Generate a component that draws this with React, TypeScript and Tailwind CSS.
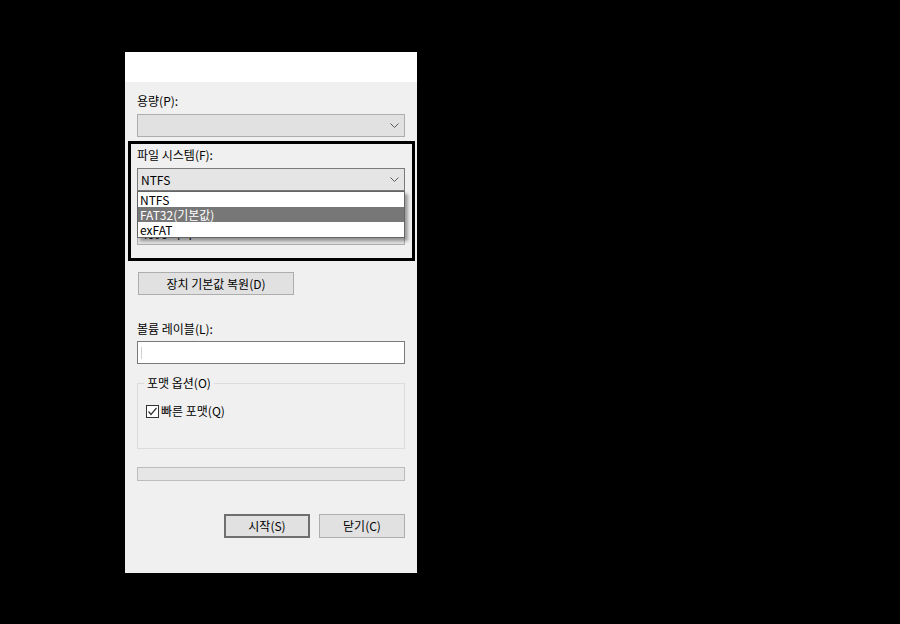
import React from "react";

const Chevron = () => (
  <svg width="9" height="5" viewBox="0 0 9 5" className="shrink-0">
    <polyline points="0.5,0.5 4.5,4.5 8.5,0.5" fill="none" stroke="#5a5a5a" strokeWidth="1" />
  </svg>
);

export default function App() {
  const font = { fontFamily: '"Noto Sans CJK KR", "Noto Sans", sans-serif' };
  return (
    <div className="w-[900px] h-[624px] bg-black pt-[52px] pl-[125px]" style={font}>
      <div className="relative w-[292px] h-[521px] flex flex-col bg-[#f0f0f0] text-[12px] text-black">
        <div className="h-[30px] bg-white shrink-0" />
        <div className="flex flex-col px-[12px]">
          <div className="mt-[11px] h-[16px] leading-[16px]">용량(P):</div>
          <div className="mt-[5px] h-[23px] border border-[#adadad] bg-[#e1e1e1] flex items-center justify-end pr-[5px]">
            <Chevron />
          </div>

          <div className="mt-[10px] h-[16px] leading-[16px]">파일 시스템(F):</div>
          <div className="mt-[5px] h-[23px] border border-[#7a7a7a] bg-[#e5e5e5] flex items-center justify-between pl-[3px] pr-[5px]">
            <span className="leading-[16px]">NTFS</span>
            <Chevron />
          </div>

          <div className="mt-[10px] h-[16px] leading-[16px] invisible">할당 단위 크기(A):</div>
          <div className="mt-[5px] h-[23px] border border-[#adadad] bg-[#e1e1e1] flex items-center justify-between pl-[3px] pr-[5px]">
            <span className="leading-[16px]">4096 바이트</span>
            <Chevron />
          </div>

          <button className="mt-[27px] ml-[1px] w-[156px] h-[23px] border border-[#adadad] bg-[#e1e1e1] text-[12px] leading-[16px]">
            장치 기본값 복원(D)
          </button>

          <div className="mt-[26px] h-[16px] leading-[16px]">볼륨 레이블(L):</div>
          <div className="mt-[4px] h-[23px] border border-[#7a7a7a] bg-white flex items-center pl-[3px]">
            <div className="w-px h-[12px] bg-[#d0d0d0]" />
          </div>

          <div className="relative mt-[19px] h-[66px] border border-[#dcdcdc]">
            <div className="absolute -top-[9px] left-[6px] px-[3px] bg-[#f0f0f0] leading-[16px]">포맷 옵션(O)</div>
            <div className="flex items-center mt-[19px] ml-[8px] gap-[2px]">
              <div className="w-[13px] h-[13px] border border-[#333333] bg-white flex items-center justify-center">
                <svg width="11" height="11" viewBox="0 0 11 11">
                  <polyline points="1.5,5.5 4,8.5 9.5,2" fill="none" stroke="#333333" strokeWidth="1.2" />
                </svg>
              </div>
              <span className="leading-[16px]">빠른 포맷(Q)</span>
            </div>
          </div>

          <div className="mt-[18px] h-[14px] border border-[#bcbcbc] bg-[#e6e6e6]" />

          <div className="mt-[33px] flex justify-end gap-[9px]">
            <button className="w-[86px] h-[24px] border-2 border-[#6f6f6f] bg-[#e1e1e1] text-[12px] leading-[16px]">
              시작(S)
            </button>
            <button className="w-[86px] h-[24px] border border-[#adadad] bg-[#e1e1e1] text-[12px] leading-[16px]">
              닫기(C)
            </button>
          </div>
        </div>

        {/* dropdown list */}
        <div className="absolute left-[12px] top-[139px] w-[268px] border border-[#646464] bg-white flex flex-col shadow-[3px_3px_3px_rgba(0,0,0,0.35)]">
          <div className="h-[15px] leading-[15px] pl-[2px]">NTFS</div>
          <div className="h-[15px] leading-[15px] pl-[2px] bg-[#777777] text-white">FAT32(기본값)</div>
          <div className="h-[15px] leading-[15px] pl-[2px]">exFAT</div>
        </div>

        {/* highlight frame */}
        <div className="absolute left-[3px] top-[89px] w-[287px] h-[120px] border-[3px] border-black pointer-events-none" />
      </div>
    </div>
  );
}
